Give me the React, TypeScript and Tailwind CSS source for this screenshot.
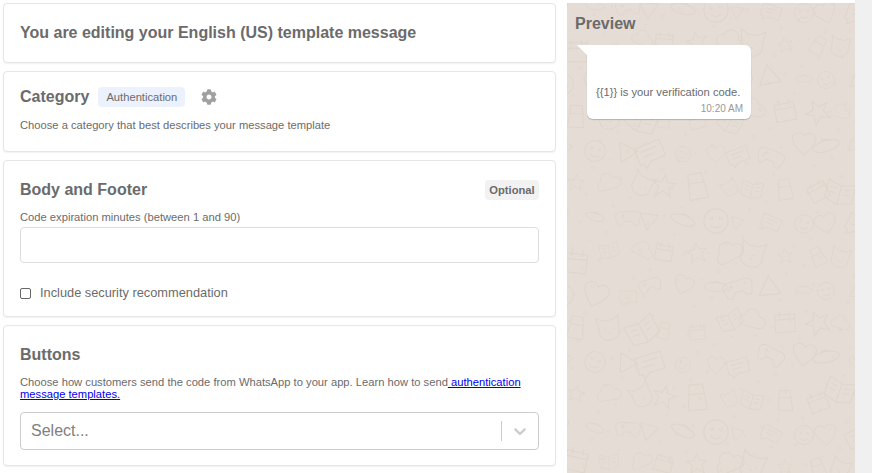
import { FaCog } from "react-icons/fa"

const shapes = [
  "M0 -7C-3 -12 -11 -9 -9 -3C-8 1 -3 5 0 8C3 5 8 1 9 -3C11 -9 3 -12 0 -7Z",
  "M0 -9L2.5 -3L9 -3L4 1L6 8L0 4L-6 8L-4 1L-9 -3L-2.5 -3Z",
  "M-10 -7H10V6H-2L-7 10V6H-10Z M-6 -3H6 M-6 1H3",
  "M-9 5A5 5 0 0 1 -7 -4A6 6 0 0 1 5 -5A5 5 0 0 1 8 5Z",
  "M-9 0A9 9 0 1 0 9 0A9 9 0 1 0 -9 0Z M-4 -3A1 1 0 1 0 -3 -3 M3 -3A1 1 0 1 0 4 -3 M-4 3A5 5 0 0 0 4 3",
  "M-8 -6H8V8H-8Z M-8 -2H8 M-4 -9V-4 M4 -9V-4",
  "M-6 -8L8 0L-6 8Z",
  "M-11 -8L0 -5L11 -8V7L0 10L-11 7Z M0 -5V10 M-8 -3L-3 -2 M-8 1L-3 2 M3 -2L8 -3 M3 2L8 1",
  "M-10 0A10 4 0 1 0 10 0A10 4 0 1 0 -10 0Z M-4 -3A5 5 0 0 1 4 -3",
  "M-5 -10H5L7 9H-7Z M-6 -3H6",
  "M-12 -2A5 5 0 0 1 -7 -6H7A5 5 0 0 1 12 -2L10 6A3 3 0 0 1 5 6L3 3H-3L-5 6A3 3 0 0 1 -10 6Z M-7 -2H-3 M-5 -4V0 M5 -2H6",
  "M-8 -3L-9 -10L-4 -7H4L9 -10L8 -3V3A8 6 0 0 1 -8 3Z M-4 0H-3 M3 0H4 M-1 3H1",
]

// deterministic doodle layout for the wallpaper
const doodles = Array.from({ length: 154 }, (_, i) => {
  const col = i % 11
  const row = Math.floor(i / 11)
  const jitterX = ((i * 37) % 11) - 5
  const jitterY = ((i * 53) % 13) - 6
  return {
    x: col * 29 + (row % 2) * 14 + jitterX,
    y: row * 35 + 8 + jitterY,
    d: shapes[(i * i * 3 + i * 5 + row * 7) % shapes.length],
    rotate: ((i * 41) % 60) - 30,
    scale: 0.85 + ((i * 19) % 6) / 10,
  }
})

const dots = Array.from({ length: 240 }, (_, i) => ({
  x: ((i * 47) % 289) + 0.5,
  y: ((i * 83) % 471) + 0.5,
  r: 0.7 + (i % 3) * 0.4,
}))

function Wallpaper() {
  return (
    <svg className="absolute inset-0 h-full w-full" viewBox="0 0 288 470" fill="none" stroke="#ded5cc" strokeWidth="0.8">
      {doodles.map((item, i) => (
        <path key={i} d={item.d} transform={`translate(${item.x} ${item.y}) rotate(${item.rotate}) scale(${item.scale})`} />
      ))}
      {dots.map((dot, i) => (
        <circle key={i} cx={dot.x} cy={dot.y} r={dot.r} />
      ))}
    </svg>
  )
}

function Title({ children }: { children: React.ReactNode }) {
  return <h2 className="text-base leading-5 font-bold text-[#6b6b6b]">{children}</h2>
}

export default function App() {
  return (
    <div className="flex h-[473px] overflow-hidden bg-white font-['Liberation_Sans',Arial,sans-serif] text-[#6b6b6b]">
      <div className="ml-[3px] mt-[3px] flex w-[553px] flex-col gap-2">
        <section className="h-[60px] rounded-[4px] border border-[#e6e6e6] bg-white px-4 pt-[19px] shadow-[0_1px_2px_rgba(0,0,0,0.06)]">
          <Title>You are editing your English (US) template message</Title>
        </section>

        <section className="h-[81px] rounded-[4px] border border-[#e6e6e6] bg-white px-4 pt-[15px] shadow-[0_1px_2px_rgba(0,0,0,0.06)]">
          <div className="flex items-center">
            <Title>Category</Title>
            <span className="ml-[9px] flex h-5 w-[87px] items-center justify-center rounded-[4px] bg-[#ebf1fd] text-[11.2px]">Authentication</span>
            <FaCog className="ml-4 h-4 w-4 text-[#a0a0a0]" />
          </div>
          <p className="mt-[12px] text-[11.2px] leading-3">Choose a category that best describes your message template</p>
        </section>

        <section className="h-[157px] rounded-[4px] border border-[#e6e6e6] bg-white px-4 pt-[19px] shadow-[0_1px_2px_rgba(0,0,0,0.06)]">
          <div className="flex items-center justify-between">
            <Title>Body and Footer</Title>
            <span className="flex h-5 w-[54px] items-center justify-center rounded-[4px] bg-[#f2f2f2] text-[11.2px] font-bold">Optional</span>
          </div>
          <label className="mt-[11px] block text-[11.2px] leading-3">Code expiration minutes (between 1 and 90)</label>
          <input className="mt-1 block h-9 w-full rounded-[4px] border border-[#ddd] bg-white" />
          <div className="mt-[23px] flex items-center gap-[9px]">
            <span className="h-[11px] w-[11px] rounded-[2px] border border-[#666]" />
            <span className="text-[12.8px] leading-[14px]">Include security recommendation</span>
          </div>
        </section>

        <section className="h-[141px] rounded-[4px] border border-[#e6e6e6] bg-white px-4 pt-[19px] shadow-[0_1px_2px_rgba(0,0,0,0.06)]">
          <Title>Buttons</Title>
          <p className="mt-[11px] text-[11.2px] leading-3">
            Choose how customers send the code from WhatsApp to your app. Learn how to send
            <a href="#" className="text-[#0000ee] underline"> authentication message templates.</a>
          </p>
          <div className="mt-[12px] flex h-[38px] items-center rounded-[4px] border border-[#ccc] bg-white">
            <span className="flex-1 pl-[10px] text-base text-[#808080]">Select...</span>
            <span className="h-5 w-px bg-[#ccc]" />
            <svg className="mx-2 h-5 w-5 text-[#ccc]" viewBox="0 0 20 20" fill="currentColor">
              <path d="M4.516 7.548c.436-.446 1.043-.481 1.576 0L10 11.295l3.908-3.747c.533-.481 1.141-.446 1.574 0 .436.445.408 1.197 0 1.615-.406.418-4.695 4.502-4.695 4.502a1.095 1.095 0 0 1-1.576 0S4.924 9.581 4.516 9.163c-.409-.418-.436-1.17 0-1.615z" />
            </svg>
          </div>
        </section>
      </div>

      <div className="relative ml-[11px] mt-[3px] h-[470px] w-[288px] overflow-hidden bg-[#e5ddd5]">
        <Wallpaper />
        <div className="relative px-2 pt-3">
          <h2 className="text-base leading-[18px] font-bold text-[#6b6b6b]">Preview</h2>
          <div className="relative ml-3 mt-3 h-[74px] w-[164px] rounded-b-[6px] rounded-tr-[6px] bg-white shadow-[0_1px_1px_rgba(0,0,0,0.2)]">
            <svg className="absolute -left-[10px] top-0 h-[10px] w-[10px]" viewBox="0 0 10 10">
              <path d="M0 0H10V10Z" fill="#fff" />
            </svg>
            <p className="absolute left-[9px] top-[41px] text-[11.2px] leading-3 whitespace-nowrap">{"{{1}} is your verification code."}</p>
            <span className="absolute bottom-[4px] right-[8px] text-[10px] leading-3 text-[#999]">10:20 AM</span>
          </div>
        </div>
      </div>

      <div className="h-full w-[17px] bg-[#f0f0f0]" />
    </div>
  )
}
